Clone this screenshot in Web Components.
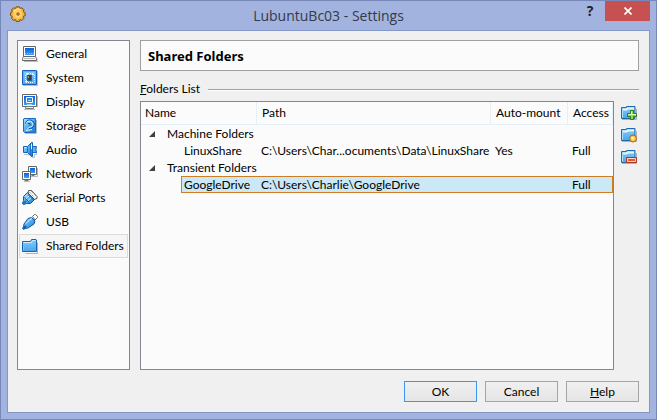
<!DOCTYPE html>
<html lang="en">
<head>
<meta charset="utf-8">
<title>LubuntuBc03 - Settings</title>
<style>
html,body{margin:0;height:100%}
body{font:12px/16px Lato,"Noto Sans",sans-serif;color:#000}
</style>
</head>
<body>
<settings-window caption="LubuntuBc03 - Settings">
  <category-list slot="nav"></category-list>
  <page-heading slot="page">Shared Folders</page-heading>
  <folders-panel slot="page"></folders-panel>
  <dialog-buttons slot="footer"></dialog-buttons>
</settings-window>
<script>
const gradients = `<defs>
<linearGradient id="b" x1="0" y1="0" x2="1" y2="1"><stop offset="0" stop-color="#b5e3fb"/><stop offset=".5" stop-color="#4fabee"/><stop offset="1" stop-color="#1675d4"/></linearGradient>
<linearGradient id="f" x1="0" y1="0" x2="0" y2="1"><stop offset="0" stop-color="#8ccbf7"/><stop offset="1" stop-color="#48a5ee"/></linearGradient>
<linearGradient id="s" x1="0" y1="0" x2="0" y2="1"><stop offset="0" stop-color="#0d5fd0"/><stop offset="1" stop-color="#35a0ff"/></linearGradient>
<radialGradient id="g"><stop offset="0" stop-color="#fff3b8"/><stop offset=".6" stop-color="#f9c64c"/><stop offset="1" stop-color="#e29a28"/></radialGradient></defs>`;
const folder = `<path d="M3.5 15.5h12v-11" fill="none" stroke="#a9b4bc"/><path d="M.5 13.500V3.500h8l1-2h4.500l.5.5v11.500z" fill="url(#f)" stroke="#1763ae"/><path d="M1.500 5V4.500h8l1-2h3" fill="none" stroke="#c9ecff"/><path d="M1.500 12.500v-7h8l1-1h3" fill="none" stroke="#77c4f6"/>`;
const smallFolder = `<path d="M1 14.500h14.500V4" fill="none" stroke="#aab2b8"/><path d="M.5 13.500v-11h5v-1h8.500v12z" fill="url(#f)" stroke="#1d6aac"/><path d="M1.500 4.500h4l1-1H13" fill="none" stroke="#e1f6ff" stroke-width="2"/><path d="M1.500 6v6.500" stroke="#b3e2fb"/>`;
const art = {
general:`<path d="M2 15.500h14v-3" fill="none" stroke="#bbb"/><path d="M1.500.5h12v10h-12z" fill="#fff" stroke="#666"/><path d="M3 2h9v7H3z" fill="url(#s)"/><path d="M3 7.500h9" stroke="#71bdff" stroke-dasharray="1 1"/><path d="M1.500 10.500h12l1 2v2H.5v-2z" fill="#f5f5f5" stroke="#666"/><path d="M2 12.500h11" stroke="#bbb"/>`,
system:`<path d="M1 15.500h14.500V1" fill="none" stroke="#b5bdc5"/><path d="M.5.5h14v14H.5z" fill="url(#f)" stroke="#1763b8"/><path d="M1.500 1.500h12v12h-12z" fill="none" stroke="#56aef2"/><path d="M4 3.500h8M4 12.500h8M3.500 5v7M12.500 5v7" stroke="#e7f8ff" stroke-dasharray="1 1"/><path d="M4 3h2v2H4zM10 4h2v1h-2zM4 10h2v2H4z" fill="#d9f2ff"/><path d="M5 5h5v6H5z" fill="#1b66a6"/><path d="M6 5h3v5H6z" fill="#3b3b3b"/><path d="M6.500 6v2" stroke="#999"/>`,
display:`<path d="M2 15.500h11M15.500 2v11" stroke="#bbb"/><path d="M.5.5h14v12H.5z" fill="#fff" stroke="#666"/><path d="M2 2h11v9H2z" fill="url(#s)"/><path d="M4.500 3.500h6v5h-6z" fill="#2383ed" stroke="#fff"/><path d="M6 6.500h3M5 10.500h5" stroke="#9ad5ff"/><path d="M3.500 12.500h8v2h-8z" fill="#eee" stroke="#777"/>`,
storage:`<path d="M3 15.500h11.500V2" fill="none" stroke="#b5bdc5"/><path d="M2 .5h11.500v14H2.500l-1-1V1z" fill="url(#b)" stroke="#176bc4"/><path d="M3.500 5.500C4 2 8 1 10.500 3s2 6-.5 7-4.500 0-5.500 2.500" fill="none" stroke="#0b4e9c"/><path d="M4.500 4.500c1.500-2 5-1.500 6 .5s0 3.500-2 4-3 1.500-4 3.500M4 12.500l6-1" fill="none" stroke="#ecfaff"/><path d="M6 5.500h2v2" fill="none" stroke="#0b4e9c"/>`,
audio:`<path d="M2 12.500h5l4 3h1.500v-3h2V5" fill="none" stroke="#b5bdc5"/><path d="M1.500 4.500h4l4-4h1v14h-1l-4-4h-4z" fill="url(#b)" stroke="#1763b8"/><path d="M5.500 5v5.500M8.500 2v11" stroke="#1872ca"/><path d="M10.500 4.500h4l-1 3 1 3h-4z" fill="#59b4f4" stroke="#176bc4"/><path d="M2.500 5.500h2M9.500 2v5" stroke="#dff5ff"/>`,
network:`<path d="M7 10.500h8.500V2M2 15.500h6" fill="none" stroke="#bbb"/><path d="M6.500.5h8v8h-8z" fill="#fff" stroke="#666"/><path d="M8 2h5v5H8z" fill="url(#s)"/><path d="M9.500 9.500h3" stroke="#777"/><path d="M.5 5.500h8v8h-8z" fill="#fff" stroke="#666"/><path d="M2 7h5v5H2z" fill="url(#s)"/><path d="M2.500 14.500h4" stroke="#777"/>`,
serial:`<path d="M6.500.5h3l5.500 6v2l-3 1-6-6z" fill="#fff" stroke="#555"/><path d="M9 1l5 5M7.500 2l5 6" stroke="#777" stroke-dasharray="1 1"/><path d="M5.500 2.500l7 7-4 4H4.500l-3 1-1-1 1-3v-4z" fill="url(#b)" stroke="#0e559f"/><path d="M2.500 7.500l5 5M5.500 4l6 6" stroke="#0e65b8"/><path d="M3 6.500l2.500-2.500M4 8.500L7 6M6 10.500l3-2.500" stroke="#d9f4ff"/><path d="M1 14l3-3" stroke="#1671c7" stroke-width="2"/>`,
usb:`<path d="M10.500 2.500l2-2h1l2 2v1l-2.500 2.500z" fill="#fff" stroke="#666"/><path d="M9.500 3.500l3.500 3.500-1 3-6 4-3 .5-1.500 1-1-1 1-1.500.5-3 4-5.500z" fill="url(#b)" stroke="#1759a5"/><path d="M4 9.500l4-4 2-1" fill="none" stroke="#dcf6ff"/><path d="M1.500 14.500l2.500-2.500" stroke="#0c5dae" stroke-width="2"/>`,
shared:folder,
add:smallFolder+`<path d="M9.500 5.500h3v3h3v3h-3v3h-3v-3h-3v-3h3z" fill="#8fdc47" stroke="#2f7d1d"/><path d="M10.500 6.500v3h-3M11 9.500h4" fill="none" stroke="#e4ffc5"/>`,
edit:smallFolder+`<circle cx="12" cy="11.500" r="3.500" fill="url(#g)" stroke="#ad6b35"/><path d="M10.500 10.500h2" stroke="#fff"/>`,
remove:smallFolder+`<path d="M5.500 8.500h10v5h-10z" fill="#e24c25" stroke="#a33b28"/><path d="M6.500 9.500h8v3h-8z" fill="#e8552c" stroke="#fbd3c4"/>`,
gear:`<path d="M6.300.8h3l.6 1.600 2.100-.6 2 2-.7 2 1.900.9v2.800l-1.900.9.7 2-2 2-2.100-.7-.7 1.800H6.300l-.7-1.800-2.100.7-2-2 .7-2-1.700-.9V6.700l1.700-.9-.7-2 2-2 2.100.6z" fill="url(#g)" stroke="#875018"/><path d="M4 6c1-3 5-4 7-2" fill="none" stroke="#fff4bd"/><circle cx="8" cy="8" r="1.500" fill="#9a6a30" stroke="#c88629"/>`
};
function define(name, html, setup){
  customElements.define(name, class extends HTMLElement{
    constructor(){
      super();
      const t=document.createElement('template');
      t.innerHTML='<style>*{box-sizing:border-box}button{font:inherit;color:inherit;margin:0}</style>'+html;
      this.attachShadow({mode:'open'}).append(t.content.cloneNode(true));
    }
    connectedCallback(){ if(setup) setup(this,this.shadowRoot); }
  });
}
define('ui-icon','<style>:host{display:block;width:16px;height:16px;flex:none}svg{display:block}</style><svg width="16" height="16" viewBox="0 0 16 16" aria-hidden="true"></svg>',
  (h,r)=>r.querySelector('svg').innerHTML=gradients+art[h.getAttribute('name')]);

define('settings-window',`<style>
:host{display:flex;flex-direction:column;box-sizing:border-box;height:100vh;border:1px solid #7788b8;background:#a2b3df;padding:0 6px 6px}
header{display:grid;grid-template-columns:80px 1fr 80px;height:29px;flex:none}
ui-icon{margin:5px 0 0 3px}
h1{margin:0;font:14px/30px "Open Sans","Noto Sans",sans-serif;text-align:center;color:#333a4a}
.caps{display:flex;justify-content:flex-end;align-items:flex-start}
.caps button{border:0;padding:0;height:20px}
.help{width:30px;background:none;font:bold 14px/20px "Open Sans",sans-serif;color:#222}
.close{width:45px;background:#c75050;display:grid;place-items:center}
main{flex:1;min-height:0;display:flex;flex-direction:column;gap:11px;border:1px solid #8497c6;background:#f0f0f0;padding:9px 10px 10px 9px}
.body{flex:1;min-height:0;display:flex;gap:10px}
.page{flex:1;min-width:0;display:flex;flex-direction:column}
</style>
<header><ui-icon name="gear"></ui-icon><h1></h1><div class="caps"><button class="help" aria-label="Context help">?</button><button class="close" aria-label="Close"><svg width="8" height="8" viewBox="0 0 8 8"><path d="M.5.5l7 7M7.500.5l-7 7" stroke="#fff" stroke-width="1.700"/></svg></button></div></header>
<main><div class="body"><slot name="nav"></slot><div class="page"><slot name="page"></slot></div></div><slot name="footer"></slot></main>`,
  (h,r)=>r.querySelector('h1').textContent=h.getAttribute('caption'));

define('category-list',`<style>
:host{display:block;box-sizing:border-box;width:113px;flex:none;border:1px solid #828790;background:#fbfbfb;padding:1px}
nav{display:flex;flex-direction:column}
button{display:flex;align-items:center;gap:8px;height:24px;padding:0 0 0 2px;border:1px solid transparent;background:none;text-align:left;white-space:nowrap}
button[aria-current]{border-color:#dcdcdc;background:#f6f6f6}
</style><nav aria-label="Categories"></nav>`,
  (h,r)=>r.querySelector('nav').innerHTML=[['General','general'],['System','system'],['Display','display'],['Storage','storage'],['Audio','audio'],['Network','network'],['Serial Ports','serial'],['USB','usb'],['Shared Folders','shared']]
    .map(([t,i])=>`<button${i==='shared'?' aria-current="page"':''}><ui-icon name="${i}"></ui-icon><span>${t}</span></button>`).join(''));

define('page-heading',`<style>
:host{display:block;flex:none;border:1px solid #a0a0a0;background:#fbfbfb;padding:0 7px}
h2{margin:0;font:bold 13px/31px "Noto Sans","Open Sans",sans-serif;height:29px}
</style><h2><slot></slot></h2>`);

define('folders-panel',`<style>
:host{flex:1;min-height:0;display:flex;flex-direction:column}
.legend{display:flex;align-items:center;gap:8px;height:30px;padding-top:6px;flex:none}
.legend h3{margin:0;font:inherit}
.legend i{flex:1;height:1px;background:#a0a0a0;box-shadow:0 1px #fff}
.row{flex:1;min-height:0;display:flex;gap:7px}
.tools{display:flex;flex-direction:column;gap:6px;padding:4px 2px 0 0}
.tools button{border:0;background:none;padding:0;height:16px}
</style>
<div class="legend"><h3><u>F</u>olders List</h3><i></i></div>
<div class="row"><folder-tree></folder-tree><div class="tools"><button aria-label="Add shared folder"><ui-icon name="add"></ui-icon></button><button aria-label="Edit shared folder"><ui-icon name="edit"></ui-icon></button><button aria-label="Remove shared folder"><ui-icon name="remove"></ui-icon></button></div></div>`);

define('folder-tree',`<style>
:host{display:block;box-sizing:border-box;flex:1;min-width:0;border:1px solid #828790;background:#fbfbfb}
table{width:100%;table-layout:fixed;border-collapse:separate;border-spacing:0}
th,td{font-weight:400;text-align:left;padding:0 0 0 4px;white-space:nowrap;overflow:hidden}
thead th{height:23px;border-right:1px solid #e5eff8;border-bottom:1px solid #e5eff8;padding-left:5px}
thead th:first-child{padding-left:4px}
tbody td,tbody th{height:17px;line-height:15px}
tbody th{padding:0}
.group{display:flex;align-items:center;gap:12px;padding-left:8px}
.group button{border:0;background:none;padding:0;width:6px;height:6px}
.group svg{display:block}
.name{padding-left:3px}
.sel .name{padding-left:2px}
.sel td:not(:first-child){background:#cbe8f6;border-top:1px solid #cf7c22;border-bottom:1px solid #cf7c22}
.sel td.name{border-left:1px solid #cf7c22}
.sel td:last-child{border-right:1px solid #cf7c22}
</style>
<table><colgroup><col style="width:40px"><col style="width:76px"><col><col style="width:77px"><col style="width:45px"></colgroup>
<thead><tr><th colspan="2">Name</th><th>Path</th><th>Auto-mount</th><th>Access</th></tr></thead>
<tbody>
<tr><th colspan="5" scope="rowgroup"><div class="group"><button aria-label="Collapse Machine Folders"><svg width="6" height="6"><path d="M6 0v6H0z" fill="#404040"/></svg></button>Machine Folders</div></th></tr>
<tr><td></td><td class="name">LinuxShare</td><td>C:\\Users\\Char...ocuments\\Data\\LinuxShare</td><td>Yes</td><td>Full</td></tr>
<tr><th colspan="5" scope="rowgroup"><div class="group"><button aria-label="Collapse Transient Folders"><svg width="6" height="6"><path d="M6 0v6H0z" fill="#404040"/></svg></button>Transient Folders</div></th></tr>
<tr class="sel" aria-selected="true"><td></td><td class="name">GoogleDrive</td><td>C:\\Users\\Charlie\\GoogleDrive</td><td></td><td>Full</td></tr>
</tbody></table>`);

define('dialog-buttons',`<style>
:host{display:flex;justify-content:flex-end;gap:8px;flex:none}
button{width:73px;height:21px;padding:0;border:1px solid #a5a5a5;background:linear-gradient(#f0f0f0,#e5e5e5)}
.ok{border-color:#3c96f0}
</style><button class="ok">OK</button><button>Cancel</button><button><u>H</u>elp</button>`);
</script>
</body>
</html>
